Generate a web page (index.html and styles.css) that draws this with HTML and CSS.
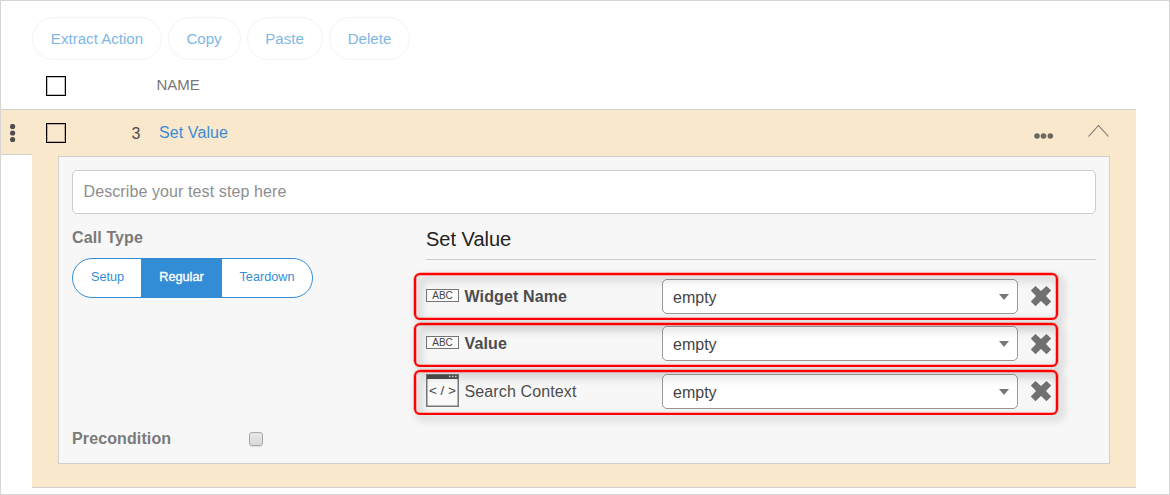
FILE: index.html
```html
<!DOCTYPE html>
<html lang="en">
<head>
<meta charset="utf-8">
<title>Test steps</title>
<link rel="stylesheet" href="styles.css">
</head>
<body>
<main class="frame">
  <nav class="toolbar">
    <button class="pill pill-extract">Extract Action</button>
    <button class="pill pill-copy">Copy</button>
    <button class="pill pill-paste">Paste</button>
    <button class="pill pill-delete">Delete</button>
  </nav>
  <div class="list-head">
    <span class="check"></span>
    <span class="col-name">NAME</span>
  </div>
  <section class="step">
    <div class="handle">
      <svg width="6" height="20" viewBox="0 0 6 20" fill="#4d4d4d"><circle cx="2.6" cy="2.5" r="2.6"/><circle cx="2.6" cy="9" r="2.6"/><circle cx="2.6" cy="15.5" r="2.6"/></svg>
    </div>
    <div class="step-main">
      <header class="step-head">
        <span class="check"></span>
        <span class="num">3</span>
        <a class="step-name">Set Value</a>
        <svg class="more" width="20" height="6" viewBox="0 0 20 6" fill="#6b6862"><circle cx="3" cy="3" r="2.8"/><circle cx="9.5" cy="3" r="2.8"/><circle cx="16.3" cy="3" r="2.8"/></svg>
        <svg class="chevron" width="22" height="14" viewBox="0 0 22 14" fill="none" stroke="#77716a" stroke-width="1.1"><path d="M.5 12.5 10.5 1.5 20.5 12.5"/></svg>
      </header>
      <div class="panel">
        <div class="describe">Describe your test step here</div>
        <div class="columns">
          <div class="left">
            <div class="label">Call Type</div>
            <div class="segments">
              <span class="seg seg-setup">Setup</span>
              <span class="seg seg-regular">Regular</span>
              <span class="seg seg-teardown">Teardown</span>
            </div>
          </div>
          <div class="right">
            <h2 class="title">Set Value</h2>
            <div class="params">
              <div class="param param-widget">
                <span class="abc">ABC</span>
                <span class="param-name strong">Widget Name</span>
                <span class="select">empty<i class="caret"></i></span>
                <svg class="remove" width="22" height="22" viewBox="0 0 22 22"><path d="M5.5 1 11 6 16.5 1 21.2 5.6 16 11 21.2 16.4 16.5 21.2 11 16 5.5 21.2 .8 16.4 6 11 .8 5.6Z"/></svg>
              </div>
              <div class="param param-value">
                <span class="abc">ABC</span>
                <span class="param-name strong">Value</span>
                <span class="select">empty<i class="caret"></i></span>
                <svg class="remove remove-low" width="22" height="22" viewBox="0 0 22 22"><path d="M5.5 1 11 6 16.5 1 21.2 5.6 16 11 21.2 16.4 16.5 21.2 11 16 5.5 21.2 .8 16.4 6 11 .8 5.6Z"/></svg>
              </div>
              <div class="param param-context">
                <svg class="code" width="33" height="33" viewBox="0 0 33 33">
                  <rect x=".75" y=".75" width="31.5" height="31.5" fill="#fafafa" stroke="#777" stroke-width="1.5"/>
                  <rect x="1" y="1" width="31" height="4" fill="#4d4d4d"/>
                  <path d="M23 2.5h1.6M26 2.5h1.6M29 2.5h1.6" stroke="#ddd" stroke-width="1.3"/>
                  <text x="16.5" y="21" text-anchor="middle" font-size="13.5" fill="#444">&lt; / &gt;</text>
                </svg>
                <span class="param-name">Search Context</span>
                <span class="select">empty<i class="caret"></i></span>
                <svg class="remove" width="22" height="22" viewBox="0 0 22 22"><path d="M5.5 1 11 6 16.5 1 21.2 5.6 16 11 21.2 16.4 16.5 21.2 11 16 5.5 21.2 .8 16.4 6 11 .8 5.6Z"/></svg>
              </div>
            </div>
          </div>
        </div>
        <div class="precondition">
          <span class="label">Precondition</span>
          <span class="native-check"></span>
        </div>
      </div>
    </div>
  </section>
</main>
</body>
</html>
```

FILE: styles.css
```css
* { box-sizing: border-box; }
body { margin: 0; background: #fff; font-family: "Liberation Sans", Arial, sans-serif; font-size: 16px; color: #4d4d4d; }
.frame { width: 1170px; height: 495px; border: 1px solid #d5d5d5; padding-top: 16px; overflow: hidden; }
.toolbar { display: flex; gap: 6px; padding-left: 31px; }
.pill { height: 43px; padding: 0 0 1px; border: 1px solid #f4f4f4; border-radius: 22px; background: #fff; color: #7fb7e4; font: 15.1px "Liberation Sans", Arial, sans-serif; }
.pill-extract { width: 130px; }
.pill-copy { width: 73px; padding-right: 1px; }
.pill-paste { width: 76px; padding-right: 1px; }
.pill-delete { width: 81px; }
.list-head { display: flex; align-items: flex-start; height: 49px; padding: 16px 0 0 45px; }
.check { width: 20px; height: 20px; border: 1px solid #000; box-shadow: inset 0 0 0 1px rgba(0, 0, 0, .25); }
.col-name { margin-left: 90.5px; font-size: 15px; line-height: 17px; color: #777; }
.step { display: flex; align-items: flex-start; width: 1135px; }
.handle { width: 31px; height: 46px; padding: 14px 0 0 9px; background: #f9e8cc; border: solid #d0d0d0; border-width: 1px 0; }
.handle svg { display: block; }
.step-main { width: 1104px; height: 379px; background: #f9e8cc; border: solid #d0d0d0; border-width: 1px 0; padding: 0 26px; }
.step-head { display: flex; align-items: flex-start; height: 46px; margin-left: -12px; padding-top: 13px; }
.num { width: 9px; margin-left: 65.5px; line-height: 21px; }
.step-name { width: 100px; margin-left: 18.5px; line-height: 19px; letter-spacing: .1px; color: #3c8bd6; }
.more { margin: 10px 0 0 775px; }
.chevron { margin-left: 34px; margin-top: 1px; }
.panel { width: 1052px; height: 308px; padding: 13px; border: 1px solid #d0d0d0; background: #f7f7f7; }
.describe { height: 44px; padding-left: 10.5px; border: 1px solid #ccc; border-radius: 5px; background: #fff; line-height: 41px; letter-spacing: .1px; color: #8e8e8e; }
.columns { display: flex; height: 215px; }
.left { width: 354px; padding-top: 14px; }
.label { font-weight: bold; line-height: 20px; color: #7a7a7a; letter-spacing: .12px; }
.segments { display: flex; width: 241px; height: 40px; margin-top: 10px; border: 1px solid #338dd6; border-radius: 20px; overflow: hidden; background: #fff; }
.seg { text-align: center; font-size: 12.7px; line-height: 37px; color: #338dd6; }
.seg-setup { width: 68px; padding-left: 1px; }
.seg-regular { width: 81px; background: #338dd6; color: #fff; -webkit-text-stroke: .35px #fff; }
.seg-teardown { width: 90px; }
.right { width: 670px; }
.title { margin: 0; height: 46px; padding-top: 13px; border-bottom: 1px solid #ccc; font-size: 20px; font-weight: normal; line-height: 24px; color: #222; }
.params { width: 645px; margin: 13px 0 0 -13px; }
.param { position: relative; display: flex; align-items: flex-start; padding-left: 13px; }
.param::after { content: ""; position: absolute; inset: -.5px 0 .5px .5px; border: 2px solid #f00; border-radius: 6px; box-shadow: 0 0 0 .5px rgba(255, 0, 0, .5), inset 0 0 0 .5px rgba(255, 0, 0, .5); filter: drop-shadow(4px 4px 4px rgba(0, 0, 0, .35)); }
.param-widget { height: 47px; padding-top: 6px; }
.param-value { height: 44px; margin-top: 3px; padding-top: 3px; }
.param-context { height: 45px; margin-top: 3px; padding-top: 4px; }
.abc { width: 33px; height: 13px; margin-top: 10px; border: 1px solid #777; background: #fafafa; font-size: 10px; line-height: 12px; text-align: center; color: #444; }
.code { flex: none; }
.param-name { width: 197.5px; margin-left: 5.5px; padding-top: 1px; line-height: 34px; letter-spacing: .12px; }
.strong { font-weight: bold; }
.select { display: flex; align-items: center; justify-content: space-between; width: 356px; height: 35px; padding: 2px 8px 0 10px; border: 1px solid #999; border-radius: 5px; background: #fff; color: #444; }
.caret { border: 5px solid transparent; border-top: 6px solid #777; border-bottom: 0; margin-top: -2px; }
.remove { margin: 6px 0 0 12px; fill: #717171; }
.remove-low { margin-top: 7px; }
.precondition { display: flex; align-items: flex-start; }
.precondition .native-check { width: 14px; height: 14px; margin: 3px 0 0 78px; border: 1px solid #aaa; border-radius: 3px; background: linear-gradient(#e8e8e8, #d8d8d8); box-shadow: 0 1px 1px rgba(0, 0, 0, .12); }
```
